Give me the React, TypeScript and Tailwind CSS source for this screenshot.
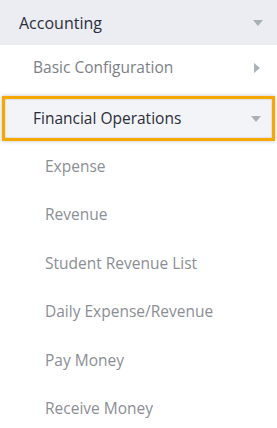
const subItems = [
  "Expense",
  "Revenue",
  "Student Revenue List",
  "Daily Expense/Revenue",
  "Pay Money",
  "Receive Money",
];

const CaretDown = () => (
  <svg width="10" height="6" viewBox="0 0 10 6" className="fill-[#a9b0b7]">
    <path d="M0 0h10L5 6z" />
  </svg>
);

const CaretRight = () => (
  <svg width="6" height="10" viewBox="0 0 6 10" className="fill-[#a9b0b7]">
    <path d="M0 0l6 5-6 5z" />
  </svg>
);

export default function App() {
  return (
    <div className="w-[277px] h-[428px] bg-white overflow-hidden font-['Open_Sans',sans-serif]">
      <div className="h-[45px] bg-[#ecedf3] flex items-center justify-between pl-[19px] pr-[14px]">
        <span className="text-[16px] text-[#2b2d3a]">Accounting</span>
        <CaretDown />
      </div>
      <div className="h-[45px] flex items-center justify-between pl-[33px] pr-[17px]">
        <span className="text-[15.5px] text-[#7b7f86]">Basic Configuration</span>
        <CaretRight />
      </div>
      <div className="px-[2px] pt-[6px]">
        <div className="h-[45px] bg-[#f3f4f8] border-[3px] border-[#f7a800] shadow-[0_0_4px_rgba(0,0,0,0.25),inset_0_0_2px_rgba(0,0,0,0.25)] flex items-center justify-between pl-[28px] pr-[11px]">
          <span className="text-[15.5px] text-[#2b2d3a]">Financial Operations</span>
          <CaretDown />
        </div>
      </div>
      <ul className="pt-[1px]">
        {subItems.map((item) => (
          <li key={item} className="h-[48.5px] flex items-center pl-[45px] text-[15.5px] text-[#8b8e94]">
            {item}
          </li>
        ))}
      </ul>
    </div>
  );
}
